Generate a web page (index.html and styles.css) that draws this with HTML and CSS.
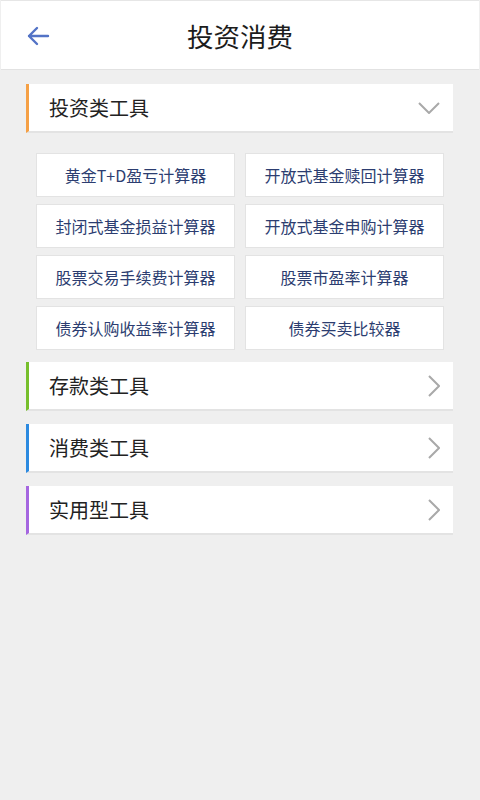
FILE: index.html
```html
<!DOCTYPE html>
<html lang="zh-CN">
<head>
	<meta charset="UTF-8">
	<meta name="viewport" content="width=device-width, initial-scale=1.0">
	<title>投资消费</title>
	<link rel="stylesheet" href="styles.css">
</head>
<body>
	<div class="header">
		<span class="back">
			<svg width="24" height="20" viewBox="0 0 24 20"><path d="M22 10H3M11 2L3 10l8 8" fill="none" stroke="#5373c6" stroke-width="2.4" stroke-linecap="round" stroke-linejoin="round"/></svg>
		</span>
		<div class="title">投资消费</div>
	</div>

	<div class="content">
		<div class="group orange">
			<div class="group-title">投资类工具</div>
			<svg class="arrow" width="22" height="12" viewBox="0 0 22 12"><path d="M1 1l10 10L21 1" fill="none" stroke="#a9a9a9" stroke-width="2"/></svg>
		</div>

		<div class="tools">
			<div class="tool">黄金T+D盈亏计算器</div>
			<div class="tool">开放式基金赎回计算器</div>
			<div class="tool">封闭式基金损益计算器</div>
			<div class="tool">开放式基金申购计算器</div>
			<div class="tool">股票交易手续费计算器</div>
			<div class="tool">股票市盈率计算器</div>
			<div class="tool">债券认购收益率计算器</div>
			<div class="tool">债券买卖比较器</div>
		</div>

		<div class="group green">
			<div class="group-title">存款类工具</div>
			<svg class="arrow" width="12" height="22" viewBox="0 0 12 22"><path d="M1 1l10 10L1 21" fill="none" stroke="#a9a9a9" stroke-width="2"/></svg>
		</div>
		<div class="group blue">
			<div class="group-title">消费类工具</div>
			<svg class="arrow" width="12" height="22" viewBox="0 0 12 22"><path d="M1 1l10 10L1 21" fill="none" stroke="#a9a9a9" stroke-width="2"/></svg>
		</div>
		<div class="group purple">
			<div class="group-title">实用型工具</div>
			<svg class="arrow" width="12" height="22" viewBox="0 0 12 22"><path d="M1 1l10 10L1 21" fill="none" stroke="#a9a9a9" stroke-width="2"/></svg>
		</div>
	</div>
</body>
</html>
```

FILE: styles.css
```css
html, body {
	margin: 0;
	padding: 0;
}
body {
	background: #efefef;
	font-family: "Noto Sans CJK SC", "Liberation Sans", sans-serif;
	height: 800px;
}
.header {
	position: relative;
	height: 68px;
	margin: 0 1px;
	background: #fff;
	border-top: 1px solid #e6e6e6;
	border-bottom: 1px solid #e2e2e2;
	display: flex;
	align-items: center;
	justify-content: center;
}
.header .back {
	position: absolute;
	left: 25px;
	top: 25px;
	display: flex;
}
.header .title {
	font-size: 26.5px;
	color: #1c1c1c;
}
.content {
	padding: 14px 27px 0 26px;
}
.group {
	height: 47px;
	background: #fff;
	border-left: 3px solid #f5a045;
	border-bottom: 2px solid #e3e3e3;
	display: flex;
	align-items: center;
	justify-content: space-between;
	padding: 0 11px 0 20px;
	margin-bottom: 13px;
}
.group.orange { border-left-color: #f5a045; margin-bottom: 14px; }
.group.green { border-left-color: #76bf2c; }
.group.blue { border-left-color: #2c8ae0; }
.group.purple { border-left-color: #a566e0; }
.group-title {
	font-size: 20px;
	color: #222;
}
.group .arrow {
	margin-right: 2px;
}
.tools {
	display: grid;
	grid-template-columns: 199px 199px;
	column-gap: 10px;
	row-gap: 7px;
	padding: 6px 0 0 10px;
	margin-bottom: 12px;
}
.tool {
	height: 42px;
	background: #fff;
	border: 1px solid #e3e3e3;
	display: flex;
	align-items: center;
	justify-content: center;
	font-size: 16px;
	color: #2c3d70;
}
```
